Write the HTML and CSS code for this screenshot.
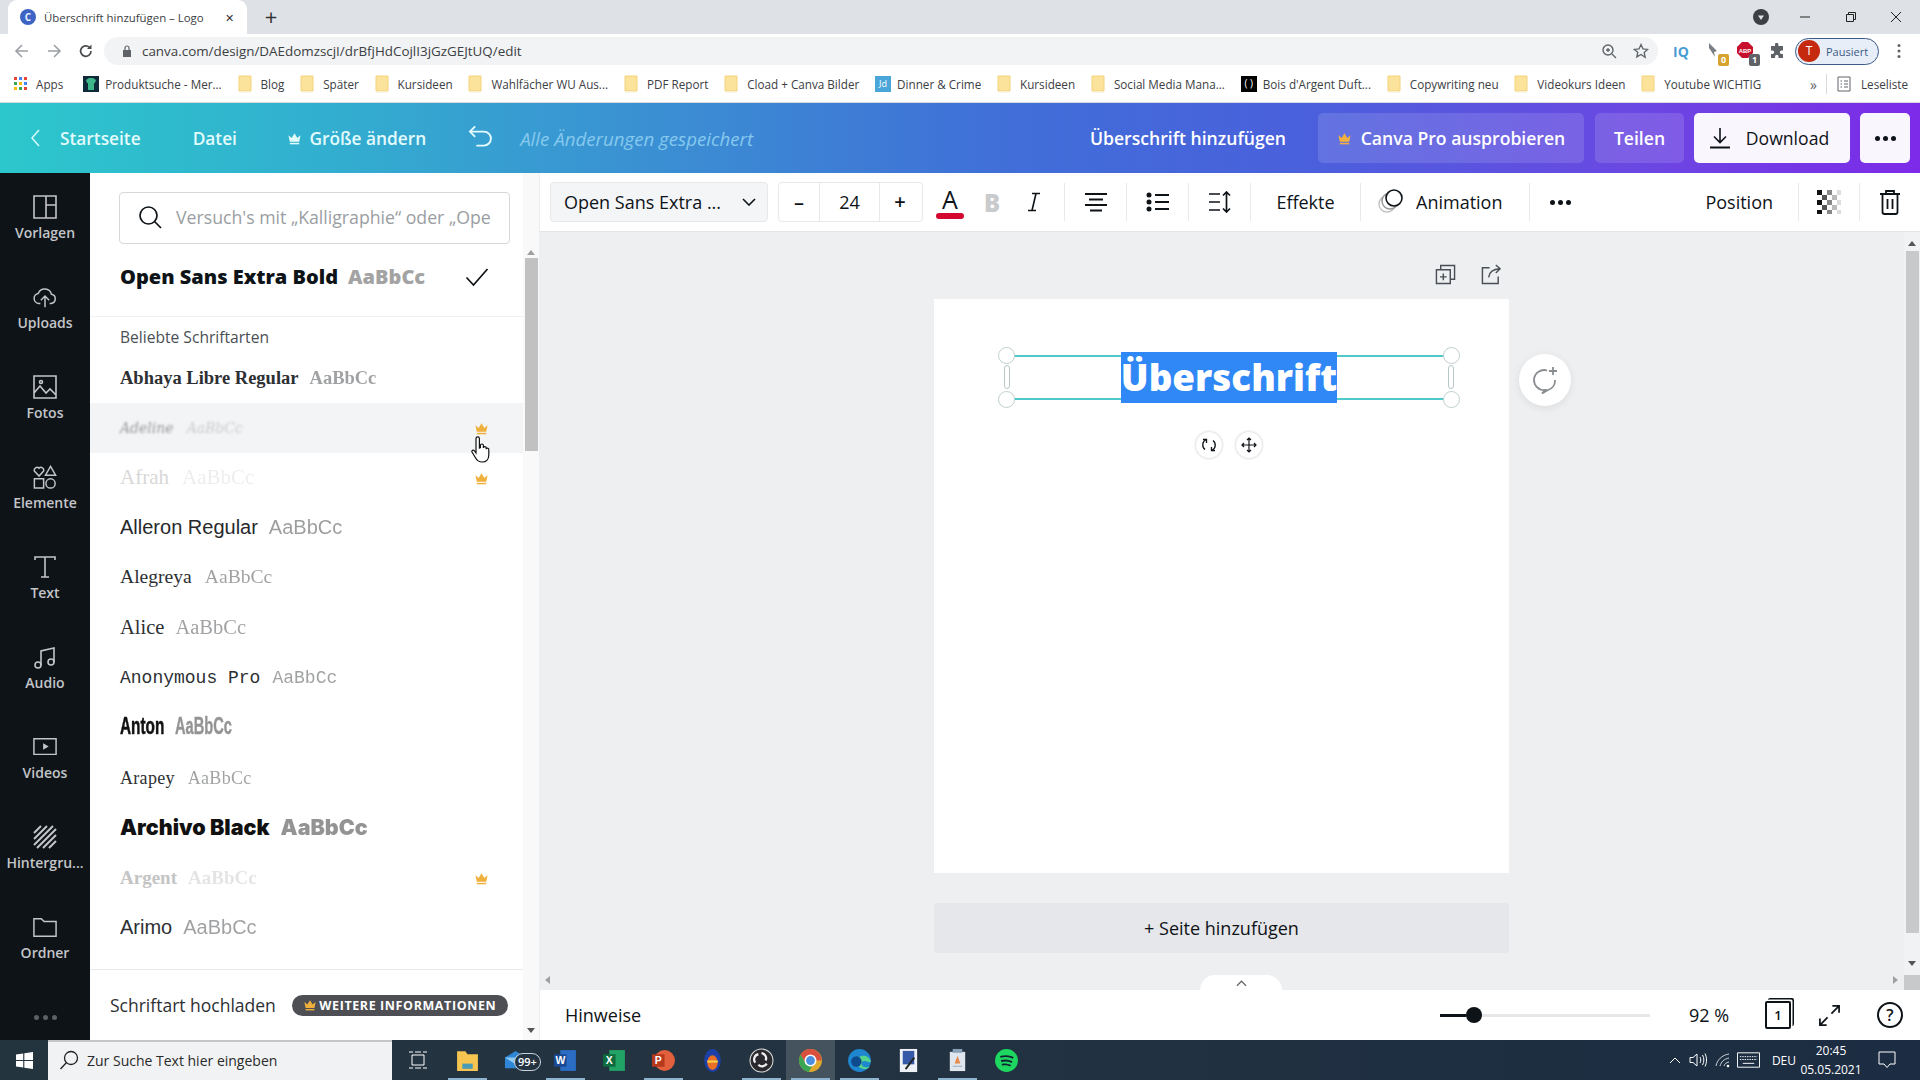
FILE: index.html
```html
<!DOCTYPE html>
<html lang="de">
<head>
<meta charset="utf-8">
<title>Überschrift hinzufügen – Logo</title>
<link rel="stylesheet" href="styles.css">
</head>
<body>
<svg class="defs" width="0" height="0">
  <symbol id="crown" viewBox="0 0 16 16"><path d="M1.5 4.5 5 7.5 8 2.5l3 5 3.5-3-1.5 7H3z"/><rect x="3" y="12.6" width="10" height="1.6"/></symbol>
  <symbol id="folder" viewBox="0 0 14 18"><path d="M1 1h12v15H1z" fill="#fbe39b" stroke="#f3d27a"/><path d="M1 16h12v1.5H1z" fill="#f7eed0"/></symbol>
</svg>

<div class="tabbar">
  <div class="tab">
    <svg class="fav" viewBox="0 0 16 16"><circle cx="8" cy="8" r="8" fill="#3f63c4"/><text x="8" y="11.5" text-anchor="middle" font-size="10" font-family="Open Sans" font-weight="700" fill="#e6f3ff">C</text></svg>
    <span class="tab-title">Überschrift hinzufügen – Logo</span>
    <span class="tab-close">✕</span>
  </div>
  <span class="tab-new">+</span>
  <div class="grow"></div>
  <svg class="win-ico win-prof" viewBox="0 0 16 16"><circle cx="8" cy="8" r="8" fill="#3c4043"/><path d="M5 6.5h6L8 11z" fill="#dee1e6"/></svg>
  <svg class="win-ico win-min" viewBox="0 0 12 12"><path d="M1 6h10" stroke="#222" fill="none"/></svg>
  <svg class="win-ico win-max" viewBox="0 0 12 12"><path d="M1.5 3.5h7v7h-7zM3.5 3.5v-2h7v7h-2" stroke="#222" fill="none"/></svg>
  <svg class="win-ico win-close" viewBox="0 0 12 12"><path d="M1 1l10 10M11 1 1 11" stroke="#222" fill="none"/></svg>
</div>

<div class="omnibar">
  <svg class="nav-ico" viewBox="0 0 16 16"><path d="M14 8H2M8 2 2 8l6 6" stroke="#9aa0a6" stroke-width="1.6" fill="none"/></svg>
  <svg class="nav-ico" viewBox="0 0 16 16"><path d="M2 8h12M8 2l6 6-6 6" stroke="#9aa0a6" stroke-width="1.6" fill="none"/></svg>
  <svg class="nav-ico" viewBox="0 0 16 16"><path d="M13 8a5.2 5.2 0 1 1-1.6-3.7" stroke="#4a4d50" stroke-width="1.7" fill="none"/><path d="M13.5 1.5v4.4H9z" fill="#4a4d50"/></svg>
  <div class="addr">
    <svg class="lock" viewBox="0 0 10 12"><path d="M1 5h8v7H1z" fill="#5f6368"/><path d="M3 5V3a2 2 0 0 1 4 0v2" stroke="#5f6368" fill="none" stroke-width="1.2"/></svg>
    <span class="url">canva.com/design/DAEdomzscjI/drBfjHdCojlI3jGzGEJtUQ/edit</span>
    <div class="grow"></div>
    <svg class="addr-ico" viewBox="0 0 16 16"><circle cx="7" cy="7" r="5" stroke="#5f6368" stroke-width="1.4" fill="none"/><path d="M11 11l4 4M5 7h4M7 5v4" stroke="#5f6368" stroke-width="1.3"/></svg>
    <svg class="addr-ico" viewBox="0 0 16 16"><path d="M8 1.5l2 4.4 4.7.5-3.5 3.2 1 4.7L8 11.5l-4.200 2.400 1-4.700L1.300 6.400 6 5.900z" stroke="#5f6368" stroke-width="1.300" fill="none"/></svg>
  </div>
  <span class="ext-iq">IQ</span>
  <span class="ext ext-pin">
    <svg viewBox="0 0 16 16"><path d="M3 1l8 8-3 1 1 5-6-9z" fill="#7a7f85"/></svg>
    <span class="badge badge-y">0</span>
  </span>
  <span class="ext ext-abp">
    <svg viewBox="0 0 16 16"><path d="M5 0h6l5 5v6l-5 5H5l-5-5V5z" fill="#c8102e"/><text x="8" y="10.500" text-anchor="middle" font-size="6" font-family="Liberation Sans" font-weight="700" fill="#fff">ABP</text></svg>
    <span class="badge badge-g">1</span>
  </span>
  <svg class="puzzle" viewBox="0 0 16 16"><path d="M6 1.500a1.700 1.700 0 0 1 3.400 0V3H14v4.500h-1.500a1.700 1.700 0 0 0 0 3.400H14V15H9.500v-1.500a1.700 1.700 0 0 0-3.400 0V15H2v-4h1.500a1.700 1.700 0 0 0 0-3.400H2V3h4z" fill="#5f6368"/></svg>
  <div class="profile"><span class="avatar">T</span><span class="profile-text">Pausiert</span></div>
  <svg class="kebab" viewBox="0 0 4 16"><circle cx="2" cy="2.500" r="1.500" fill="#5f6368"/><circle cx="2" cy="8" r="1.500" fill="#5f6368"/><circle cx="2" cy="13.500" r="1.500" fill="#5f6368"/></svg>
</div>

<div class="bookmarks">
  <span class="bm bm-apps">
    <svg class="bm-ico-apps" viewBox="0 0 14 14"><g fill="#5f6368"><rect x="0" y="0" width="3" height="3" fill="#ea4335"/><rect x="5" y="0" width="3" height="3" fill="#4285f4"/><rect x="10" y="0" width="3" height="3" fill="#ea4335"/><rect x="0" y="5" width="3" height="3" fill="#34a853"/><rect x="5" y="5" width="3" height="3" fill="#fbbc05"/><rect x="10" y="5" width="3" height="3" fill="#4285f4"/><rect x="0" y="10" width="3" height="3" fill="#fbbc05"/><rect x="5" y="10" width="3" height="3" fill="#34a853"/><rect x="10" y="10" width="3" height="3" fill="#ea4335"/></g></svg>
    Apps
  </span>
  <span class="bm"><svg class="bm-ico-prod" viewBox="0 0 16 16"><rect width="16" height="16" fill="#0e2a3a"/><path d="M3 4l3-2h4l3 2-1 3h-1v7H5V7H4z" fill="#3fb58a"/></svg>Produktsuche - Mer...</span>
  <span class="bm"><svg class="folder"><use href="#folder"/></svg>Blog</span>
  <span class="bm"><svg class="folder"><use href="#folder"/></svg>Später</span>
  <span class="bm"><svg class="folder"><use href="#folder"/></svg>Kursideen</span>
  <span class="bm"><svg class="folder"><use href="#folder"/></svg>Wahlfächer WU Aus...</span>
  <span class="bm"><svg class="folder"><use href="#folder"/></svg>PDF Report</span>
  <span class="bm"><svg class="folder"><use href="#folder"/></svg>Cload + Canva Bilder</span>
  <span class="bm"><span class="bm-jd">Jd</span>Dinner &amp; Crime</span>
  <span class="bm"><svg class="folder"><use href="#folder"/></svg>Kursideen</span>
  <span class="bm"><svg class="folder"><use href="#folder"/></svg>Social Media Mana...</span>
  <span class="bm"><span class="bm-bois">( )</span>Bois d'Argent Duft...</span>
  <span class="bm"><svg class="folder"><use href="#folder"/></svg>Copywriting neu</span>
  <span class="bm"><svg class="folder"><use href="#folder"/></svg>Videokurs Ideen</span>
  <span class="bm"><svg class="folder"><use href="#folder"/></svg>Youtube WICHTIG</span>
  <div class="grow"></div>
  <span class="bm-more">»</span>
  <span class="bm-sep"></span>
  <span class="bm bm-read">
    <svg class="bm-ico-read" viewBox="0 0 14 16"><path d="M1 1h12v14H1zM3.500 5H5M7 5h4M3.500 8H5M7 8h4M3.500 11H5M7 11h4" stroke="#5f6368" fill="none"/></svg>
    Leseliste
  </span>
</div>

<header class="header">
  <svg class="hd-back" viewBox="0 0 10 20"><path d="M8.500 2 1.500 10l7 8" stroke="#d5fbfb" stroke-width="1.500" fill="none"/></svg>
  <span class="hd-link hd-start">Startseite</span>
  <span class="hd-link hd-file">Datei</span>
  <svg class="hd-crown"><use href="#crown"/></svg>
  <span class="hd-link">Größe ändern</span>
  <svg class="hd-undo" viewBox="0 0 24 24"><path d="M7 2 2.500 6.500 7 11" stroke="#e6fbff" stroke-width="1.600" fill="none"/><path d="M3 6.500h11.500a6 6 0 0 1 0 12H8" stroke="#e6fbff" stroke-width="1.600" fill="none"/></svg>
  <span class="hd-saved">Alle Änderungen gespeichert</span>
  <div class="grow"></div>
  <span class="hd-title">Überschrift hinzufügen</span>
  <span class="hd-btn hd-pro"><svg class="pro-crown"><use href="#crown"/></svg>Canva Pro ausprobieren</span>
  <span class="hd-btn hd-share">Teilen</span>
  <span class="hd-white hd-download">
    <svg class="dl-ico" viewBox="0 0 22 22"><path d="M11 1v14M5 9.500l6 6 6-6" stroke="#0e1318" stroke-width="1.600" fill="none"/><path d="M1 20.500h20" stroke="#0e1318" stroke-width="2"/></svg>
    Download
  </span>
  <span class="hd-white hd-dots"><i></i><i></i><i></i></span>
</header>

<div class="main">
  <nav class="rail">
    <div class="rail-item"><svg viewBox="0 0 24 24"><path d="M1 1h22v22H1zM13 1v22M13 10h10"/></svg><span>Vorlagen</span></div>
    <div class="rail-item"><svg viewBox="0 0 26 24"><path d="M8 19H6.500a5.500 5.500 0 0 1-.8-10.900 7.500 7.500 0 0 1 14.300 1A5 5 0 0 1 19.500 19H18"/><path d="M13 23V11M8.500 15.500 13 11l4.500 4.500"/></svg><span>Uploads</span></div>
    <div class="rail-item"><svg viewBox="0 0 24 24"><path d="M1 1h22v22H1zM1 18l6-7 6 7 4-4 6 6"/><circle cx="8" cy="7" r="1.500"/></svg><span>Fotos</span></div>
    <div class="rail-item"><svg viewBox="0 0 26 26"><path d="M6.500 12 1.500 6.500a3 3 0 0 1 5-3 3 3 0 0 1 5 3zM19 1.500l5.500 9.500h-11zM1.500 15h10v10h-10z"/><circle cx="19" cy="20" r="5"/></svg><span>Elemente</span></div>
    <div class="rail-item"><svg viewBox="0 0 24 24"><path d="M2 5V2h20v3M12 2v20M8 22h8"/></svg><span>Text</span></div>
    <div class="rail-item"><svg viewBox="0 0 24 24"><path d="M8 20V6l13-3v14"/><circle cx="5" cy="20" r="3"/><circle cx="18" cy="17" r="3"/></svg><span>Audio</span></div>
    <div class="rail-item"><svg viewBox="0 0 26 20"><path d="M1 1h24v17H1z"/><path class="solid" d="M11 6l6 3.500-6 3.500z"/></svg><span>Videos</span></div>
    <div class="rail-item"><svg viewBox="0 0 24 24"><path class="thick" d="M1 8 8 1M1 14 14 1M1 20 20 1M4 23 23 4M10 23 23 10M16 23l7-7"/></svg><span>Hintergru...</span></div>
    <div class="rail-item"><svg viewBox="0 0 26 22"><path d="M1 2h8l3 3h13v16H1z"/></svg><span>Ordner</span></div>
    <div class="rail-dots"><i></i><i></i><i></i></div>
  </nav>

  <aside class="panel">
    <div class="panel-col">
      <div class="search-wrap">
        <div class="search">
          <svg class="search-ico" viewBox="0 0 24 24"><circle cx="10.500" cy="10.500" r="8.500" stroke="#0e1318" stroke-width="1.700" fill="none"/><path d="M16.500 16.500 23 23" stroke="#0e1318" stroke-width="1.700"/></svg>
          <span class="search-ph">Versuch's mit „Kalligraphie“ oder „Ope</span>
        </div>
      </div>
      <div class="current">
        <span class="cur-name">Open Sans Extra Bold</span>
        <span class="cur-sample">AaBbCc</span>
        <svg class="check" viewBox="0 0 24 20"><path d="M1.500 10.500 8.500 18 22.500 2" stroke="#0e1318" stroke-width="1.700" fill="none"/></svg>
      </div>
      <div class="section-label">Beliebte Schriftarten</div>
      <div class="font-list">
        <div class="frow f-abhaya"><span>Abhaya Libre Regular</span><span class="smp">AaBbCc</span></div>
        <div class="frow frow-hover f-adeline"><span>Adeline</span><span class="smp">AaBbCc</span><svg class="fcrown"><use href="#crown"/></svg>
          <svg class="cursor" viewBox="0 0 20 28"><path d="M6 2.500a1.700 1.700 0 0 1 3.400 0V12l1-.4V9.500a1.500 1.500 0 0 1 3 0v2.400a1.400 1.400 0 0 1 2.800.300v1a1.300 1.300 0 0 1 2.600.3V19c0 4-2.500 7-6.500 7-4 0-5.500-1.500-7-4.500L2 16c-.7-1.500 1.400-2.500 2.500-1L6 17z" fill="#fff" stroke="#111" stroke-width="1.200"/></svg>
        </div>
        <div class="frow f-afrah"><span>Afrah</span><span class="smp">AaBbCc</span><svg class="fcrown"><use href="#crown"/></svg></div>
        <div class="frow f-alleron"><span>Alleron Regular</span><span class="smp">AaBbCc</span></div>
        <div class="frow f-alegreya"><span>Alegreya</span><span class="smp">AaBbCc</span></div>
        <div class="frow f-alice"><span>Alice</span><span class="smp">AaBbCc</span></div>
        <div class="frow f-anon"><span>Anonymous Pro</span><span class="smp">AaBbCc</span></div>
        <div class="frow f-anton"><span>Anton</span><span class="smp">AaBbCc</span></div>
        <div class="frow f-arapey"><span>Arapey</span><span class="smp">AaBbCc</span></div>
        <div class="frow f-archivo"><span>Archivo Black</span><span class="smp">AaBbCc</span></div>
        <div class="frow f-argent"><span>Argent</span><span class="smp">AaBbCc</span><svg class="fcrown"><use href="#crown"/></svg></div>
        <div class="frow f-arimo"><span>Arimo</span><span class="smp">AaBbCc</span></div>
      </div>
      <div class="panel-foot">
        <span class="upload">Schriftart hochladen</span>
        <span class="more-badge"><svg class="badge-crown"><use href="#crown"/></svg>WEITERE INFORMATIONEN</span>
      </div>
    </div>
    <div class="pscroll">
      <span class="arrow-up"></span>
      <span class="pthumb"></span>
      <div class="grow"></div>
      <span class="arrow-down"></span>
    </div>
  </aside>

  <section class="workspace">
    <div class="texttools">
      <div class="fontsel"><span>Open Sans Extra ...</span><svg class="chev" viewBox="0 0 14 8"><path d="M1 1l6 6 6-6" stroke="#0e1318" stroke-width="1.600" fill="none"/></svg></div>
      <div class="sizegrp"><span class="sz-btn">–</span><span class="sz-val">24</span><span class="sz-btn">+</span></div>
      <div class="tcell tcolor"><span class="tA">A</span><span class="tbar"></span></div>
      <div class="tcell tbold">B</div>
      <div class="tcell titalic"><svg viewBox="0 0 16 20"><path d="M6 1.500h8M2 18.500h8M10 1.500l-4 17" stroke="#0e1318" stroke-width="1.600" fill="none"/></svg></div>
      <div class="tcell tsep"><svg class="ti" viewBox="0 0 24 20"><path d="M1 2h22M5 7.500h14M1 13h22M6 18.500h12" stroke="#0e1318" stroke-width="1.800"/></svg></div>
      <div class="tcell tsep"><svg class="ti" viewBox="0 0 24 20"><circle cx="3" cy="3" r="2.500"/><circle cx="3" cy="10" r="2.500"/><circle cx="3" cy="17" r="2.500"/><path d="M9 3h14M9 10h14M9 17h14" stroke="#0e1318" stroke-width="1.800"/></svg></div>
      <div class="tcell tsep"><svg class="ti" viewBox="0 0 24 22"><path d="M1 3h11M1 11h11M1 19h11M18.500 1v20M15 4.500 18.500 1 22 4.500M15 17.500l3.500 3.500 3.500-3.500" stroke="#0e1318" stroke-width="1.700" fill="none"/></svg></div>
      <div class="tcell tsep tc-eff">Effekte</div>
      <div class="tcell tsep tc-anim">
        <svg class="anim-ico" viewBox="0 0 26 26"><circle cx="9" cy="15" r="8" stroke="#c4c4c4" stroke-width="1.500" fill="#fff"/><circle cx="12" cy="12" r="8" stroke="#999" stroke-width="1.500" fill="#fff"/><circle cx="16" cy="9" r="8" stroke="#0e1318" stroke-width="1.600" fill="#fff"/></svg>
        Animation
      </div>
      <div class="tcell tsep tc-dots"><i></i><i></i><i></i></div>
      <div class="grow"></div>
      <div class="tc-pos">Position</div>
      <div class="tcell tsep tc-61">
        <svg class="checker" viewBox="0 0 24 24"><g fill="#111"><rect width="5" height="5"/><rect y="10" width="5" height="5"/><rect y="20" width="5" height="4"/></g><g fill="#555"><rect x="5" y="5" width="5" height="5"/><rect x="5" y="15" width="5" height="5"/></g><g fill="#888"><rect x="10" width="5" height="5"/><rect x="10" y="10" width="5" height="5"/><rect x="10" y="20" width="5" height="4"/></g><g fill="#bbb"><rect x="15" y="5" width="5" height="5"/><rect x="15" y="15" width="5" height="5"/></g><g fill="#ddd"><rect x="20" width="4" height="5"/><rect x="20" y="10" width="4" height="5"/><rect x="20" y="20" width="4" height="4"/></g></svg>
      </div>
      <div class="tcell tsep tc-61">
        <svg class="trash" viewBox="0 0 22 26"><path d="M1 5h20M7 5V2h8v3M3.500 5v18a2 2 0 0 0 2 2h11a2 2 0 0 0 2-2V5M8.500 10v10M13.500 10v10" stroke="#0e1318" stroke-width="1.800" fill="none"/></svg>
      </div>
    </div>

    <div class="stage">
      <div class="canvas-col">
        <div class="page-tools">
          <svg class="pt-ico" viewBox="0 0 22 22"><path d="M6 6V1.500h14.500V16H16" stroke="#4a4f55" stroke-width="1.500" fill="none"/><path d="M1.500 6H16v14.500H1.500zM8.700 10v7M5.200 13.500h7" stroke="#4a4f55" stroke-width="1.500" fill="none"/></svg>
          <svg class="pt-ico" viewBox="0 0 22 22"><path d="M9 4H1.500v16.500H18V13M8 14C8.500 8 12 5.500 20 5M15.500 1 20 5l-4.500 4.500" stroke="#4a4f55" stroke-width="1.500" fill="none"/></svg>
        </div>
        <div class="page">
          <div class="textbox">
            <span class="sel">Überschrift</span>
            <i class="hd tl"></i><i class="hd tr"></i><i class="hd bl"></i><i class="hd br"></i>
            <i class="pill pl"></i><i class="pill pr"></i>
          </div>
          <div class="handles">
            <span class="round"><svg viewBox="0 0 16 16"><path d="M5 2.500A6 6 0 0 0 4 12.500M11 13.500A6 6 0 0 0 12 3.500" stroke="#0e1318" stroke-width="1.300" fill="none"/><path d="M2 2.500h3.500V6M14 13.500h-3.500V10" stroke="#0e1318" stroke-width="1.300" fill="none"/></svg></span>
            <span class="round"><svg viewBox="0 0 16 16"><path d="M8 1v14M1 8h14M6 3l2-2 2 2M6 13l2 2 2-2M3 6 1 8l2 2M13 6l2 2-2 2" stroke="#0e1318" stroke-width="1.200" fill="none"/></svg></span>
          </div>
          <span class="comment"><svg viewBox="0 0 28 28"><path d="M16 4.500A10 10 0 1 0 14 24l-3 3.500 6-3.500a10 10 0 0 0 7-10M22 1v8M18 5h8" stroke="#8a8d90" stroke-width="1.800" fill="none"/></svg></span>
        </div>
        <div class="addpage">+ Seite hinzufügen</div>
      </div>
      <div class="vscroll">
        <span class="arrow-up"></span>
        <span class="vthumb"></span>
        <span class="arrow-down"></span>
      </div>
      <span class="harrow-l"></span>
      <span class="harrow-r"></span>
      <span class="notch"><svg viewBox="0 0 12 7"><path d="M1 6l5-5 5 5" stroke="#666" stroke-width="1.300" fill="none"/></svg></span>
      <span class="corner"></span>
    </div>

    <div class="bottombar">
      <span class="hints">Hinweise</span>
      <div class="grow"></div>
      <div class="slider"><span class="s-done"></span><span class="s-knob"></span><span class="s-rest"></span></div>
      <span class="zoomval">92 %</span>
      <span class="pages"><span class="pages-num">1</span></span>
      <svg class="expand" viewBox="0 0 24 24"><path d="M14 10 22 2M15 2h7v7M10 14l-8 8M2 15v7h7" stroke="#0e1318" stroke-width="1.800" fill="none"/></svg>
      <span class="help">?</span>
    </div>
  </section>
</div>

<footer class="taskbar">
  <span class="start"><svg viewBox="0 0 20 20"><path d="M0 3l8.500-1.300V9.500H0zM9.800 1.500 20 0v9.500H9.800zM0 10.500h8.500v7.800L0 17zM9.800 10.500H20V20L9.800 18.500z" fill="#fff"/></svg></span>
  <div class="ts-search">
    <svg class="ts-ico" viewBox="0 0 20 20"><circle cx="12" cy="8" r="6.500" stroke="#222" stroke-width="1.300" fill="none"/><path d="M7.500 12.500 1.500 19" stroke="#222" stroke-width="1.300"/></svg>
    <span>Zur Suche Text hier eingeben</span>
  </div>
  <span class="ticon ticon-view"><svg viewBox="0 0 18 18"><path d="M3 4h12v10H3zM0 1h4M6 1h6M14 1h4M0 17h4M6 17h6M14 17h4" stroke="#fff" fill="none"/></svg></span>
  <span class="ticon t-on"><svg viewBox="0 0 24 24"><path d="M2 3h8l2 3h10v16H2z" fill="#f5c451"/><path d="M7 15h10v5H7z" fill="#4a9bb5"/></svg></span>
  <span class="ticon ticon-mail"><svg viewBox="0 0 26 24"><path d="M1 9 12 2l11 7v11H1z" fill="#2f86d6"/><path d="M1 9l11 7 11-7" fill="#8ccaf2"/></svg><span class="mail-badge">99+</span></span>
  <span class="ticon t-on"><svg viewBox="0 0 24 24"><path d="M7 2h15v20H7z" fill="#2b6cc4"/><path d="M1 6h12v12H1z" fill="#1a4a94"/><text x="7" y="15.500" text-anchor="middle" font-size="10" font-weight="700" font-family="Liberation Sans" fill="#fff">W</text></svg></span>
  <span class="ticon"><svg viewBox="0 0 24 24"><path d="M7 2h15v20H7z" fill="#21a366"/><path d="M1 6h12v12H1z" fill="#0e6b3e"/><text x="7" y="15.500" text-anchor="middle" font-size="10" font-weight="700" font-family="Liberation Sans" fill="#fff">X</text></svg></span>
  <span class="ticon t-on"><svg viewBox="0 0 24 24"><circle cx="13" cy="12" r="10" fill="#e2603c"/><path d="M1 6h12v12H1z" fill="#b7391c"/><text x="7" y="15.500" text-anchor="middle" font-size="10" font-weight="700" font-family="Liberation Sans" fill="#fff">P</text></svg></span>
  <span class="ticon"><svg viewBox="0 0 24 24"><ellipse cx="12" cy="12" rx="8" ry="11" fill="#1c3fa8"/><ellipse cx="12" cy="14" rx="5" ry="7" fill="#e96f25"/><path d="M7 13h10" stroke="#f6d34a" stroke-width="2"/></svg></span>
  <span class="ticon t-on"><svg viewBox="0 0 24 24"><circle cx="12" cy="12" r="11" fill="#2a2a2e" stroke="#ddd"/><path d="M12 5a5 5 0 0 1 4 7M17 15a5 5 0 0 1-8 1M6 14a5 5 0 0 1 3-8" stroke="#eee" stroke-width="2.200" fill="none"/></svg></span>
  <span class="ticon t-active"><svg viewBox="0 0 24 24"><circle cx="12" cy="12" r="11" fill="#e0a92c"/><path d="M12 1a11 11 0 0 0-9.500 5.500L8 16l4-4h10.500A11 11 0 0 0 12 1z" fill="#d9503f"/><path d="M2.500 6.500a11 11 0 0 0 8 16.500L14 16 8 16z" fill="#3aa655"/><circle cx="12" cy="12" r="5" fill="#4a8fe0" stroke="#fff" stroke-width="1.500"/></svg></span>
  <span class="ticon t-on"><svg viewBox="0 0 24 24"><circle cx="12" cy="12" r="11" fill="#1f86d0"/><path d="M23 13c-2-6-8-7-12-4-3 3-2 9 4 11 3 .5 5 0 7-2-4 1-8 0-8-3s3-3 5-2 3 1 4 0z" fill="#55d38a"/><circle cx="9" cy="13" r="5" fill="#0e4a8e"/></svg></span>
  <span class="ticon"><svg viewBox="0 0 24 26"><path d="M3 1h18v24H3z" fill="#eef1f6"/><path d="M6 3h12v14H6z" fill="#3559a6"/><path d="M9 22 18 10" stroke="#222" stroke-width="2"/></svg></span>
  <span class="ticon t-on"><svg viewBox="0 0 24 26"><path d="M4 4h16v20H4z" fill="#dfe6ee"/><path d="M7 1h10v4H7z" fill="#8aa2b8"/><path d="M12 8l3 8H9z" fill="#e88a4c"/><path d="M7 19h10" stroke="#9ab" /></svg></span>
  <span class="ticon"><svg viewBox="0 0 24 24"><circle cx="12" cy="12" r="11" fill="#1ed760"/><path d="M6 8.500c4-1 9-1 12.500 1M6.800 12.500c3.500-.8 7.500-.5 10.500 1M7.500 16c3-.6 6-.4 8.500 1" stroke="#123" stroke-width="1.800" fill="none"/></svg></span>
  <div class="grow"></div>
  <div class="tray">
    <svg class="tr-caret" viewBox="0 0 12 7"><path d="M1 6l5-5 5 5" stroke="#fff" fill="none"/></svg>
    <svg class="tr-ico" viewBox="0 0 18 16"><path d="M1 5.500h3L8 2v12l-4-3.500H1zM11 5c1 2 1 4 0 6M13.500 3c1.800 3 1.800 7 0 10M16 1.500c2 4 2 9 0 13" stroke="#fff" fill="none"/></svg>
    <svg class="tr-ico" viewBox="0 0 18 16"><path d="M1 14C2 8 7 3 14 2M5 14c1-4 4-7 9-8M9 14c.6-2 2-3.500 5-4" stroke="#cfd5da" fill="none"/><circle cx="13" cy="14" r="1.300" fill="#fff"/></svg>
    <svg class="tr-kbd" viewBox="0 0 24 16"><path d="M.5.500h23v15H.5z" stroke="#fff" fill="none"/><path d="M3 4.500h18M3 7.500h18" stroke="#fff" stroke-dasharray="1.500 1"/><path d="M6 11.500h12" stroke="#fff"/></svg>
    <span class="tr-lang">DEU</span>
    <span class="clock"><span>20:45</span><span>05.05.2021</span></span>
    <svg class="tr-note" viewBox="0 0 18 18"><path d="M1 1h16v12h-5l-3 3.500L6 13H1z" stroke="#fff" fill="none"/></svg>
  </div>
</footer>
</body>
</html>
```

FILE: styles.css
```css
* { box-sizing: border-box; }
html, body { margin: 0; padding: 0; }
body {
  width: 1920px;
  height: 1080px;
  overflow: hidden;
  display: flex;
  flex-direction: column;
  font-family: "Open Sans", "Liberation Sans", sans-serif;
  color: #0e1318;
  background: #fff;
}
.defs { position: absolute; }
.grow { flex: 1; }
svg { display: block; flex: none; }

/* Chrome tab strip */
.tabbar { height: 34px; background: #dee1e6; display: flex; align-items: flex-end; padding-left: 8px; flex: none; }
.tab { width: 239px; height: 34px; background: #fff; border-radius: 9px 9px 0 0; display: flex; align-items: center; padding-left: 12px; }
.fav { width: 16px; height: 16px; margin-right: 8px; }
.tab-title { font-size: 11.4px; color: #3c4043; white-space: nowrap; width: 181px; }
.tab-close { font-size: 11px; color: #333; margin-left: 0; }
.tab-new { width: 48px; height: 34px; text-align: center; font-size: 22px; line-height: 32px; color: #333; }
.win-ico { align-self: center; }
.win-prof { width: 16px; height: 16px; margin-right: 30px; }
.win-min, .win-max, .win-close { width: 12px; height: 12px; }
.win-min { margin-right: 34px; }
.win-max { margin-right: 33px; }
.win-close { margin-right: 18px; }

/* Omnibox */
.omnibar { height: 32px; background: #fff; display: flex; align-items: center; padding: 2px 0 0 14px; flex: none; }
.nav-ico { width: 16px; height: 16px; margin-right: 16px; }
.addr { width: 1554px; height: 28px; margin-left: -6px; background: #f1f3f4; border-radius: 14px; display: flex; align-items: center; padding: 0 9px 0 18px; }
.lock { width: 10px; height: 12px; margin-right: 10px; }
.url { font-size: 13.4px; color: #3c4043; white-space: nowrap; }
.addr-ico { width: 16px; height: 16px; margin-left: 16px; }
.ext-iq { margin-left: 15px; width: 20px; font-size: 14px; font-weight: 700; color: #4b9cd3; }
.ext { position: relative; width: 18px; height: 18px; margin-left: 13px; }
.ext svg { width: 16px; height: 16px; }
.ext-abp { margin-left: 13px; }
.badge { position: absolute; right: -5px; bottom: -6px; width: 11px; height: 12px; border-radius: 2px; font-size: 9px; line-height: 12px; text-align: center; color: #fff; font-weight: 700; }
.badge-y { background: #d6a32f; }
.badge-g { background: #5f6368; }
.puzzle { width: 16px; height: 16px; margin-left: 14px; }
.profile { margin-left: 10px; width: 84px; height: 27px; border: 1px solid #3c5a86; border-radius: 14px; background: #e8eef8; display: flex; align-items: center; padding-left: 2px; }
.avatar { width: 22px; height: 22px; border-radius: 50%; background: #c5290e; color: #fff; font-size: 12px; line-height: 22px; text-align: center; }
.profile-text { font-size: 11px; color: #3c5a86; margin-left: 6px; }
.kebab { width: 4px; height: 16px; margin-left: 18px; }

/* Bookmarks */
.bookmarks { height: 37px; background: #fff; border-bottom: 1px solid #d8dade; display: flex; align-items: center; padding-left: 14px; flex: none; }
.bm { display: flex; align-items: center; font-size: 11.7px; color: #3c4043; white-space: nowrap; margin-right: 15.8px; }
.bm-ico-apps { width: 14px; height: 14px; margin-right: 8px; }
.bm-apps { margin-right: 20px; }
.bm-ico-prod { width: 16px; height: 16px; margin-right: 6px; }
.folder { width: 14px; height: 18px; margin-right: 9px; }
.bm-jd { width: 16px; height: 16px; margin-right: 6px; background: #4aa6d8; color: #fff; font-size: 9px; line-height: 16px; text-align: center; }
.bm-bois { width: 16px; height: 16px; margin-right: 6px; background: #000; color: #fff; font-size: 10px; line-height: 15px; text-align: center; white-space: nowrap; overflow: hidden; }
.bm-more { font-size: 14px; color: #5f6368; margin-right: 9px; }
.bm-sep { width: 1px; height: 20px; background: #d8dade; margin-right: 10px; }
.bm-read { margin-right: 12px; }
.bm-ico-read { width: 14px; height: 16px; margin-right: 10px; }

/* Canva header */
.header {
  height: 70px;
  flex: none;
  display: flex;
  align-items: center;
  padding-left: 30px;
  background: linear-gradient(90deg, #2cc7cc 0%, #31b2cf 15%, #3a93d2 32%, #406fd8 52%, #4a60dc 68%, #6a48e2 85%, #7d2ae8 100%);
}
.hd-back { width: 11px; height: 20px; margin-right: 19px; }
.hd-link { font-size: 17.3px; font-weight: 600; color: #e2fbfb; white-space: nowrap; }
.hd-start { margin-right: 52px; }
.hd-file { margin-right: 50px; }
.hd-crown { width: 15px; height: 15px; fill: #e2fbfb; margin-right: 7.5px; }
.hd-undo { width: 28px; height: 28px; margin-left: 41px; }
.hd-saved { margin-left: 25px; font-size: 18.7px; font-style: italic; color: #86c9ee; white-space: nowrap; }
.hd-title { font-size: 17.6px; font-weight: 600; color: #fff; margin-right: 32px; white-space: nowrap; }
.hd-btn { height: 50px; border-radius: 5px; background: rgba(255,255,255,.13); color: #fff; font-size: 17.6px; font-weight: 600; display: flex; align-items: center; justify-content: center; white-space: nowrap; }
.hd-pro { width: 266px; margin-right: 11px; }
.pro-crown { width: 15px; height: 15px; fill: #f5b13d; margin-right: 9px; }
.hd-share { width: 89px; margin-right: 10px; }
.hd-white { height: 50px; border-radius: 5px; background: #faf6fe; display: flex; align-items: center; justify-content: center; }
.hd-download { width: 156px; margin-right: 10px; padding-right: 6px; font-size: 17.6px; font-weight: 500; color: #0e1318; }
.dl-ico { width: 22px; height: 22px; margin-right: 15px; }
.hd-dots { width: 50px; margin-right: 10px; gap: 3px; }
.hd-dots i { width: 5px; height: 5px; border-radius: 50%; background: #0e1318; }

/* Main */
.main { flex: 1; min-height: 0; display: flex; }

.rail { width: 90px; flex: none; background: #0e1318; display: flex; flex-direction: column; align-items: center; }
.rail-item { height: 90px; width: 100%; display: flex; flex-direction: column; align-items: center; padding-top: 22px; }
.rail-item svg { width: 24px; height: 24px; margin-bottom: 4px; fill: none; stroke: #c3c5c8; stroke-width: 1.600; }
.rail-item svg .solid { fill: #c3c5c8; stroke: none; }
.rail-item svg .thick { stroke-width: 2; }
.rail-item span { font-size: 14px; font-weight: 600; color: #c3c5c8; white-space: nowrap; line-height: 20px; }
.rail-dots { display: flex; gap: 4px; margin-top: 32px; }
.rail-dots i { width: 5px; height: 5px; border-radius: 50%; background: #5d6165; }

.panel { width: 450px; flex: none; background: #fff; display: flex; border-right: 1px solid #eceef0; }
.panel-col { width: 433px; flex: none; display: flex; flex-direction: column; }
.search-wrap { padding: 19px 13px 0 29px; flex: none; }
.search { height: 52px; border: 1px solid #d6d8da; border-radius: 4px; display: flex; align-items: center; padding: 0 0 2px 18px; }
.search-ico { width: 24px; height: 24px; margin-right: 14px; }
.search-ph { font-size: 17.7px; color: #9a9ea2; white-space: nowrap; overflow: hidden; width: 320px; }
.current { height: 73px; flex: none; display: flex; align-items: center; padding: 0 0 7px 30px; border-bottom: 1px solid #eff0f1; }
.cur-name { font-size: 20px; font-weight: 800; color: #0e1318; }
.cur-sample { font-size: 20px; font-weight: 800; color: #a3a3a3; margin-left: 10px; }
.check { width: 24px; height: 20px; margin-left: 40px; }
.section-label { height: 36px; flex: none; display: flex; align-items: flex-end; padding: 0 0 5px 30px; font-size: 15.6px; color: #4a4f55; }
.font-list { flex: 1; min-height: 0; overflow: hidden; }
.frow { height: 50px; display: flex; align-items: center; gap: 11px; padding-left: 30px; position: relative; white-space: nowrap; color: #2d3033; }
.frow .smp { opacity: .45; }
.frow-hover { background: #f3f4f6; }
.fcrown { position: absolute; left: 384px; top: 18px; width: 15px; height: 15px; fill: #f0b03c; }
.cursor { position: absolute; left: 380px; top: 33px; width: 20px; height: 28px; z-index: 2; }
.f-abhaya { font: 700 18.500px "Liberation Serif", serif; }
.f-adeline { font: italic 14px "DejaVu Serif", serif; color: #9a9a9a; gap: 13px; }
.f-adeline span:not(.smp) { filter: blur(1px); }
.f-adeline .smp { filter: blur(1px); }
.f-afrah { font: 21px "Liberation Serif", serif; color: #d8d8d8; padding-bottom: 2px; gap: 13px; }
.f-alleron { font: 20px "Liberation Sans", sans-serif; color: #26282b; padding-bottom: 2px; }
.f-alegreya { font: 19.6px "Liberation Serif", serif; gap: 13px; padding-bottom: 2px; }
.f-alice { font: 20.500px "Liberation Serif", serif; padding-bottom: 2px; }
.f-anon { font: 18px "Liberation Mono", monospace; gap: 12px; }
.f-anton { font: 700 24px "Liberation Sans", sans-serif; color: #111; padding-bottom: 4px; -webkit-text-stroke: .5px #111; }
.f-anton span { display: inline-block; transform: scaleX(.64); transform-origin: left center; margin-right: -25px; }
.f-anton .smp { margin-right: 0; transform: scaleX(.61); }
.f-arapey { font: 18px "Liberation Serif", serif; gap: 13px; letter-spacing: .3px; }
.f-archivo { font: 900 21.5px "Inter", sans-serif; color: #111; padding-bottom: 2px; }
.f-argent { font: 700 19px "Liberation Serif", serif; color: #c4c4c4; }
.f-arimo { font: 20px "Liberation Sans", sans-serif; padding-bottom: 2px; }
.panel-foot { height: 71px; flex: none; background: #fff; border-top: 1px solid #e9eaeb; display: flex; align-items: center; padding-left: 20px; }
.upload { font-size: 17.500px; color: #2d3033; white-space: nowrap; }
.more-badge { margin-left: 16px; width: 216px; height: 21px; flex: none; border-radius: 11px; background: #4d4f54; color: #fff; font-size: 12.500px; font-weight: 700; letter-spacing: .6px; display: flex; align-items: center; justify-content: center; white-space: nowrap; }
.badge-crown { width: 14px; height: 14px; fill: #f0b03c; margin-right: 2px; }
.pscroll { width: 16px; flex: none; display: flex; flex-direction: column; align-items: center; background: #f9f9fa; }
.arrow-up { width: 0; height: 0; margin-top: 77px; border: 4px solid transparent; border-top: 0; border-bottom: 5px solid #a0a0a0; }
.arrow-down { width: 0; height: 0; border: 4px solid transparent; border-bottom: 0; border-top: 5px solid #555; margin-bottom: 7px; }
.pthumb { width: 13px; height: 193px; background: #c1c1c1; margin-top: 3px; }

/* Workspace */
.workspace { flex: 1; min-width: 0; display: flex; flex-direction: column; background: #edeff1; }
.texttools { height: 59px; flex: none; background: #fff; border-bottom: 1px solid #e4e5e7; display: flex; align-items: center; padding-left: 10px; font-size: 18px; }
.fontsel { width: 218px; height: 40px; background: #f4f5f7; border: 1px solid #e7e8ea; border-radius: 4px; display: flex; align-items: center; justify-content: space-between; padding: 0 11px 0 13px; white-space: nowrap; }
.chev { width: 14px; height: 8px; }
.sizegrp { width: 145px; height: 40px; margin: 0 6px 0 10px; border: 1px solid #e7e8ea; border-radius: 4px; display: flex; align-items: center; text-align: center; }
.sz-btn { width: 40px; font-size: 20px; font-weight: 600; line-height: 38px; }
.sz-val { width: 61px; line-height: 38px; border-left: 1px solid #e7e8ea; border-right: 1px solid #e7e8ea; }
.tcell { height: 38px; display: flex; align-items: center; justify-content: center; white-space: nowrap; flex: none; }
.tsep { width: 62px; border-left: 1px solid #e9eaeb; }
.tcolor { width: 42px; flex-direction: column; }
.tA { font-size: 25px; line-height: 26px; }
.tbar { width: 28px; height: 6px; border-radius: 3px; background: #d3072f; margin-top: 1px; }
.tbold { width: 42px; font-size: 24px; font-weight: 800; color: #c9cacc; }
.titalic { width: 42px; margin-right: 9px; }
.titalic svg { width: 16px; height: 20px; }
.ti { width: 24px; height: 22px; fill: #0e1318; }
.tc-eff { width: 110px; }
.tc-anim { width: 169px; justify-content: flex-start; padding-left: 17px; }
.anim-ico { width: 26px; height: 26px; margin-right: 12px; }
.tc-dots { gap: 3px; }
.tc-dots i { width: 5px; height: 5px; border-radius: 50%; background: #0e1318; }
.tc-pos { padding-right: 25px; white-space: nowrap; }
.tc-61 { width: 61px; }
.checker { width: 24px; height: 24px; }
.trash { width: 22px; height: 26px; }

.stage { flex: 1; min-height: 0; display: flex; position: relative; background: #eeeff1; }
.canvas-col { flex: 1; min-width: 0; padding-left: 394px; display: flex; flex-direction: column; }
.page-tools { height: 67px; width: 575px; flex: none; display: flex; justify-content: flex-end; align-items: center; gap: 25px; padding: 17px 7px 0 0; }
.pt-ico { width: 21px; height: 21px; }
.page { width: 575px; height: 574px; flex: none; background: #fff; position: relative; padding: 56px 58px 0 73px; }
.textbox { height: 45px; position: relative; border-top: 2px solid #4fc9c9; border-bottom: 2px solid #4fc9c9; display: flex; align-items: center; justify-content: center; }
.sel { font-size: 36.8px; font-weight: 800; line-height: 51px; background: #2f88f5; color: #fff; white-space: nowrap; position: relative; z-index: 1; }
.hd { position: absolute; width: 17px; height: 17px; border-radius: 50%; background: #fff; border: 1px solid #bfcfcf; z-index: 2; }
.tl { left: -9px; top: -10px; }
.tr { right: -9px; top: -10px; }
.bl { left: -9px; bottom: -10px; }
.br { right: -9px; bottom: -10px; }
.pill { position: absolute; width: 6px; height: 24px; top: 8px; border-radius: 3px; background: #fff; border: 1px solid #b8c8c8; }
.pl { left: -3px; }
.pr { right: -3px; }
.handles { display: flex; justify-content: center; gap: 14px; margin-top: 32px; }
.round { width: 26px; height: 26px; border-radius: 50%; background: #fff; box-shadow: 0 0 3px rgba(0,0,0,.25); display: flex; align-items: center; justify-content: center; }
.round svg { width: 16px; height: 16px; }
.comment { position: absolute; left: 585px; top: 55px; width: 52px; height: 52px; border-radius: 50%; background: #fff; box-shadow: 0 2px 8px rgba(0,0,0,.08); display: flex; align-items: center; justify-content: center; }
.comment svg { width: 28px; height: 28px; }
.addpage { width: 575px; height: 50px; flex: none; margin-top: 30px; background: #e6e7ea; border-radius: 3px; display: flex; align-items: center; justify-content: center; font-size: 18px; font-weight: 500; }
.vscroll { width: 16px; flex: none; display: flex; flex-direction: column; align-items: center; background: #f1f2f3; }
.vscroll .arrow-up { margin-top: 9px; border-bottom-color: #555; }
.vthumb { width: 13px; height: 682px; margin-top: 5px; background: #c8c9cb; }
.vscroll .arrow-down { margin-top: 28px; }
.harrow-l, .harrow-r { position: absolute; bottom: 6px; width: 0; height: 0; border: 4px solid transparent; }
.harrow-l { left: 5px; border-left: 0; border-right: 5px solid #a0a0a0; }
.harrow-r { right: 22px; border-right: 0; border-left: 5px solid #a0a0a0; }
.notch { position: absolute; left: 660px; bottom: 0; width: 82px; height: 15px; background: #fff; border-radius: 18px 18px 0 0; display: flex; justify-content: center; padding-top: 5px; }
.notch svg { width: 11px; height: 7px; }
.corner { position: absolute; right: 0; bottom: 0; width: 16px; height: 15px; background: #c8c9cb; }

.bottombar { height: 50px; flex: none; background: #fff; display: flex; align-items: center; padding-left: 25px; font-size: 18px; }
.hints { font-weight: 500; }
.slider { width: 210px; display: flex; align-items: center; }
.s-done { width: 26px; height: 3px; background: #0e1318; }
.s-knob { width: 16px; height: 16px; border-radius: 50%; background: #0e1318; }
.s-rest { flex: 1; height: 3px; background: #e6e7e8; }
.zoomval { margin-left: 39px; width: 44px; white-space: nowrap; }
.pages { margin-left: 32px; width: 26px; height: 28px; border: 2px solid #0e1318; border-radius: 2px; box-shadow: 2px -2px 0 -0.500px #fff, 3px -3px 0 0 #0e1318; display: flex; align-items: center; justify-content: center; }
.pages-num { font-size: 13px; font-weight: 600; }
.expand { width: 23px; height: 23px; margin-left: 27px; }
.help { margin-left: 36px; margin-right: 17px; width: 26px; height: 26px; border: 2px solid #0e1318; border-radius: 50%; font-size: 16px; font-weight: 600; line-height: 22px; text-align: center; }

/* Taskbar */
.taskbar { height: 40px; flex: none; display: flex; align-items: center; background: linear-gradient(90deg, #24343f 0%, #233341 40%, #1c2c42 100%); }
.start { width: 48px; height: 40px; display: flex; align-items: center; justify-content: center; }
.start svg { width: 17px; height: 17px; }
.ts-search { width: 344px; height: 40px; background: #f1f2f3; border-top: 2px solid #c4c6c8; display: flex; align-items: center; padding: 0 0 2px 11px; font-size: 14px; color: #2a2a2a; white-space: nowrap; }
.ts-ico { width: 20px; height: 20px; margin-right: 8px; }
.ticon { width: 49px; height: 40px; position: relative; display: flex; align-items: center; justify-content: center; }
.ticon svg { width: 25px; height: 25px; }
.ticon-view { width: 51px; }
.ticon-view svg { width: 18px; height: 18px; }
.t-on::after, .t-active::after { content: ""; position: absolute; left: 5px; right: 5px; bottom: 0; height: 2px; background: #8fb4d0; }
.t-active { background: #45535e; }
.mail-badge { position: absolute; left: 22px; top: 13px; height: 18px; padding: 0 3px; border: 1px solid #c9d2da; border-radius: 9px; background: #243341; color: #fff; font-size: 11px; font-weight: 600; line-height: 16px; }
.tray { display: flex; align-items: center; color: #fff; }
.tr-caret { width: 12px; height: 7px; margin-right: 8px; }
.tr-ico { width: 18px; height: 16px; margin-right: 8px; }
.tr-kbd { width: 23px; height: 16px; margin-left: -4px; margin-right: 12px; }
.tr-lang { font-size: 12px; margin-right: 4px; }
.clock { width: 62px; display: flex; flex-direction: column; align-items: center; font-size: 12px; line-height: 19px; margin-right: 16px; white-space: nowrap; }
.tr-note { width: 18px; height: 18px; margin-right: 24px; }
```
